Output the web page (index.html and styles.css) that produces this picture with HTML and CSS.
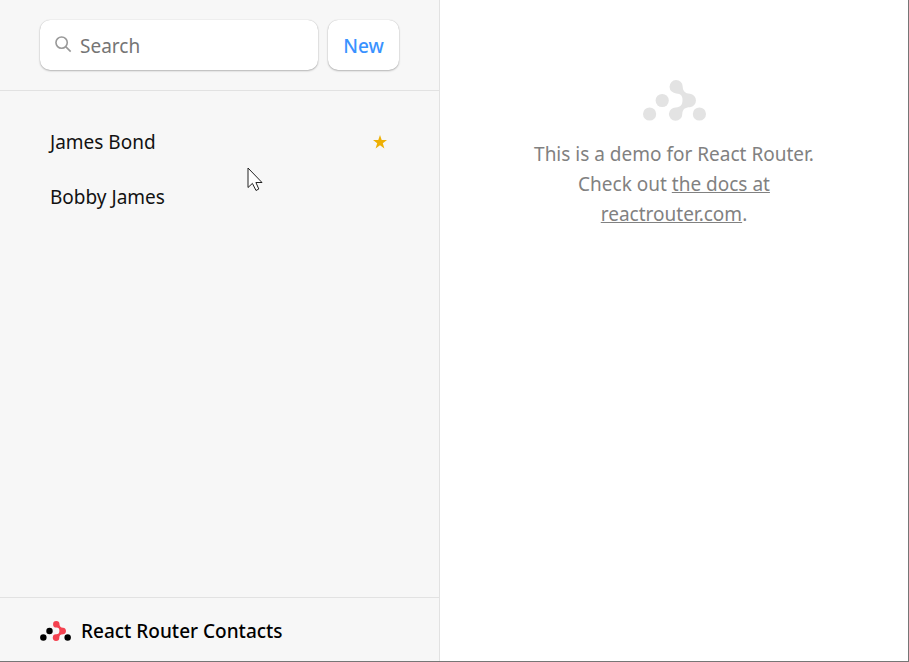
FILE: index.html
```html
<!DOCTYPE html>
<html lang="en">
<head>
<meta charset="utf-8">
<title>React Router Contacts</title>
<meta name="viewport" content="width=device-width, initial-scale=1">
<link rel="stylesheet" href="styles.css">
</head>
<body>
<div class="app">
  <aside class="sidebar">
    <div class="toolbar">
      <form class="search" role="search">
        <svg class="search-icon" viewBox="0 0 18 18" aria-hidden="true"><circle cx="7" cy="7" r="6"/><path d="M11.3 11.3 16.6 16.6"/></svg>
        <input class="search-input" type="search" aria-label="Search contacts" placeholder="Search">
      </form>
      <button class="new-button" type="button">New</button>
    </div>
    <nav class="contacts">
      <ul class="contact-list">
        <li><a class="contact" href="#james-bond"><span>James Bond</span>
          <svg class="star" viewBox="0 0 14 14" aria-label="Favorite" role="img"><path d="M7 0 8.7 5H14L9.8 8.2 11.4 13.4 7 10.3 2.6 13.4 4.2 8.2 0 5H5.3Z"/></svg></a></li>
        <li><a class="contact" href="#bobby-james"><span>Bobby James</span></a></li>
      </ul>
    </nav>
    <h1 class="brand">
      <svg class="brand-logo" viewBox="0 0 63 41" aria-hidden="true">
        <circle cx="6.6" cy="34" r="6.6"/><circle cx="19.2" cy="20.5" r="6.6"/><circle cx="56.4" cy="34" r="6.6"/>
        <path class="brand-route" d="M33 0a6.7 6.7 0 1 0 .5 13.4C37.5 13.6 39.5 15.5 39.5 20C39.5 25 37.5 27 33 27.4A6.7 6.7 0 1 0 39.3 34C39.5 29 42 27.3 47 27.2A6.8 6.8 0 0 0 47 13.7C42 13.6 40 11 39.7 7A6.7 6.7 0 0 0 33 0Z"/>
      </svg>
      <span>React Router Contacts</span>
    </h1>
  </aside>
  <main class="detail">
    <svg class="detail-logo" viewBox="0 0 63 41" aria-hidden="true">
      <circle cx="6.6" cy="34" r="6.6"/><circle cx="19.2" cy="20.5" r="6.6"/><circle cx="56.4" cy="34" r="6.6"/>
      <path d="M33 0a6.7 6.7 0 1 0 .5 13.4C37.5 13.6 39.5 15.5 39.5 20C39.5 25 37.5 27 33 27.4A6.7 6.7 0 1 0 39.3 34C39.5 29 42 27.3 47 27.2A6.8 6.8 0 0 0 47 13.7C42 13.6 40 11 39.7 7A6.7 6.7 0 0 0 33 0Z"/>
    </svg>
    <p class="intro">This is a demo for React Router.<br>Check out <a href="#docs">the docs at<br>reactrouter.com</a>.</p>
  </main>
  <svg class="pointer" viewBox="0 0 16 25" aria-hidden="true"><path d="M1 1V20.5L5.4 16.4L9 23.5L11.8 22L8.9 15.5H15Z"/></svg>
</div>
</body>
</html>
```
FILE: styles.css
```css
* {
  box-sizing: border-box;
}

body {
  margin: 0;
  font: 19px/30px "Segoe UI", "Noto Sans", sans-serif;
  color: #121212;
}

.app {
  position: relative;
  display: flex;
  min-height: 100vh;
  border-right: 1px solid #767676;
  border-bottom: 1px solid #767676;
}

.sidebar {
  display: flex;
  flex-direction: column;
  flex: 0 0 440px;
  background: #f7f7f7;
  border-right: 1px solid #e2e2e2;
}

.toolbar {
  display: flex;
  gap: 10px;
  padding: 20px 40px;
  border-bottom: 1px solid #e2e2e2;
}

.search {
  position: relative;
  flex: 1;
}

.search-icon {
  position: absolute;
  top: 16px;
  left: 15px;
  width: 17px;
  height: 17px;
  fill: none;
  stroke: #999;
  stroke-width: 1.7;
}

.search-input,
.new-button {
  height: 50px;
  padding: 2px 0 0;
  border: 0;
  border-radius: 10px;
  background: #fff;
  box-shadow: 0 0 1px rgba(0, 0, 0, 0.25), 0 1px 2px rgba(0, 0, 0, 0.25);
  font: inherit;
}

.search-input {
  display: block;
  width: 100%;
  padding-right: 15px;
  padding-left: 40px;
  appearance: none;
}

.search-input::placeholder {
  color: #757575;
}

.new-button {
  width: 71px;
  font-weight: 500;
  color: #3992ff;
}

.contacts {
  flex: 1;
  padding: 26px 40px;
}

.contact-list {
  display: grid;
  gap: 5px;
  margin: 0;
  padding: 0;
  list-style: none;
}

.contact {
  display: flex;
  align-items: center;
  justify-content: space-between;
  padding: 10px;
  color: inherit;
  text-decoration: none;
}

.star {
  width: 14px;
  height: 14px;
  margin-right: 2px;
  fill: #eeb004;
}

.brand {
  display: flex;
  align-items: center;
  gap: 10px;
  margin: 0;
  padding: 18px 40px 15px;
  border-top: 1px solid #e2e2e2;
  font-size: 19px;
  font-weight: 500;
  color: #000;
}

.brand-logo {
  width: 31px;
  height: 20px;
}

.brand-route {
  fill: #f44250;
}

.detail {
  display: flex;
  flex: 1;
  flex-direction: column;
  align-items: center;
  gap: 18px;
  padding: 80px 40px;
  background: #fff;
  color: #818181;
}

.detail-logo {
  width: 63px;
  height: 41px;
  fill: #e3e3e3;
}

.intro {
  margin: 0;
  text-align: center;
}

.intro a {
  color: inherit;
}

.pointer {
  position: absolute;
  top: 167px;
  left: 247px;
  width: 16px;
  height: 25px;
  fill: #fff;
  stroke: #222;
  pointer-events: none;
}
```
